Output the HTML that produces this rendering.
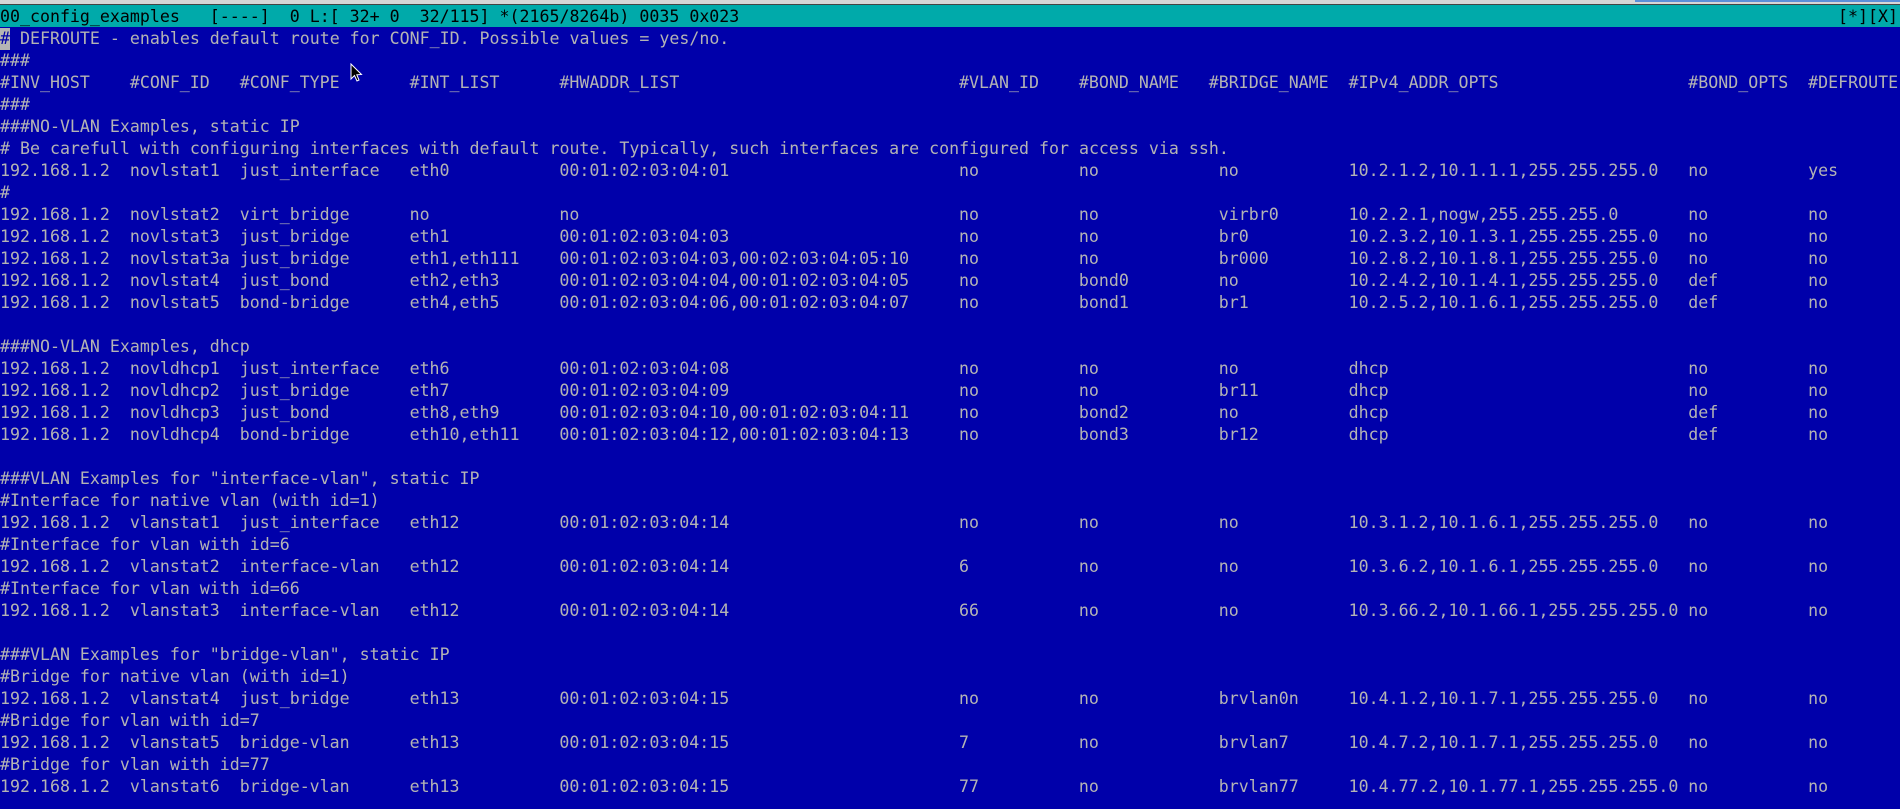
<!DOCTYPE html>
<html><head><meta charset="utf-8"><style>
html,body{margin:0;padding:0;}
body{width:1900px;height:809px;overflow:hidden;background:#0000aa;position:relative;font-family:"DejaVu Sans Mono","Liberation Mono",monospace;font-size:16.6px;color:#b4b4b4;}
#top{position:absolute;left:0;top:0;width:1900px;height:4px;background:#d6d6d6;}
#topb{position:absolute;left:1635px;top:0;width:265px;height:2px;background:#5a8fd8;}
#topl{position:absolute;left:0;top:4px;width:1900px;height:1px;background:#444;}
#hdr{position:absolute;left:0;top:5px;width:1900px;height:22px;background:#00aaaa;color:#000;line-height:23px;white-space:pre;}
#hdr .r{position:absolute;right:2px;top:0;}
#txt{position:absolute;left:0;top:28px;width:1900px;}
.l{height:22px;line-height:22px;white-space:pre;overflow:hidden;}
.l span{display:inline-block;white-space:pre;}
.a{width:13ch}.b{width:11ch}.c{width:17ch}.d{width:15ch}.e{width:40ch}.f{width:12ch}.g{width:14ch}.h{width:13ch}.i{width:34ch}.j{width:12ch}
.cur{background:#b4b4b4;color:#0000aa;}
</style></head><body>
<div id="top"></div><div id="topb"></div><div id="topl"></div>
<div id="hdr">00_config_examples   [----]  0 L:[ 32+ 0  32/115] *(2165/8264b) 0035 0x023<span class="r">[*][X]</span></div>
<div id="txt">
<div class="l"><span class="cur">#</span> DEFROUTE - enables default route for CONF_ID. Possible values = yes/no.</div>
<div class="l">###</div>
<div class="l"><span class="a">#INV_HOST</span><span class="b">#CONF_ID</span><span class="c">#CONF_TYPE</span><span class="d">#INT_LIST</span><span class="e">#HWADDR_LIST</span><span class="f">#VLAN_ID</span><span class="h">#BOND_NAME</span><span class="g">#BRIDGE_NAME</span><span class="i">#IPv4_ADDR_OPTS</span><span class="j">#BOND_OPTS</span>#DEFROUTE</div>
<div class="l">###</div>
<div class="l">###NO-VLAN Examples, static IP</div>
<div class="l"># Be carefull with configuring interfaces with default route. Typically, such interfaces are configured for access via ssh.</div>
<div class="l"><span class="a">192.168.1.2</span><span class="b">novlstat1</span><span class="c">just_interface</span><span class="d">eth0</span><span class="e">00:01:02:03:04:01</span><span class="f">no</span><span class="g">no</span><span class="h">no</span><span class="i">10.2.1.2,10.1.1.1,255.255.255.0</span><span class="j">no</span>yes</div>
<div class="l">#</div>
<div class="l"><span class="a">192.168.1.2</span><span class="b">novlstat2</span><span class="c">virt_bridge</span><span class="d">no</span><span class="e">no</span><span class="f">no</span><span class="g">no</span><span class="h">virbr0</span><span class="i">10.2.2.1,nogw,255.255.255.0</span><span class="j">no</span>no</div>
<div class="l"><span class="a">192.168.1.2</span><span class="b">novlstat3</span><span class="c">just_bridge</span><span class="d">eth1</span><span class="e">00:01:02:03:04:03</span><span class="f">no</span><span class="g">no</span><span class="h">br0</span><span class="i">10.2.3.2,10.1.3.1,255.255.255.0</span><span class="j">no</span>no</div>
<div class="l"><span class="a">192.168.1.2</span><span class="b">novlstat3a</span><span class="c">just_bridge</span><span class="d">eth1,eth111</span><span class="e">00:01:02:03:04:03,00:02:03:04:05:10</span><span class="f">no</span><span class="g">no</span><span class="h">br000</span><span class="i">10.2.8.2,10.1.8.1,255.255.255.0</span><span class="j">no</span>no</div>
<div class="l"><span class="a">192.168.1.2</span><span class="b">novlstat4</span><span class="c">just_bond</span><span class="d">eth2,eth3</span><span class="e">00:01:02:03:04:04,00:01:02:03:04:05</span><span class="f">no</span><span class="g">bond0</span><span class="h">no</span><span class="i">10.2.4.2,10.1.4.1,255.255.255.0</span><span class="j">def</span>no</div>
<div class="l"><span class="a">192.168.1.2</span><span class="b">novlstat5</span><span class="c">bond-bridge</span><span class="d">eth4,eth5</span><span class="e">00:01:02:03:04:06,00:01:02:03:04:07</span><span class="f">no</span><span class="g">bond1</span><span class="h">br1</span><span class="i">10.2.5.2,10.1.6.1,255.255.255.0</span><span class="j">def</span>no</div>
<div class="l"> </div>
<div class="l">###NO-VLAN Examples, dhcp</div>
<div class="l"><span class="a">192.168.1.2</span><span class="b">novldhcp1</span><span class="c">just_interface</span><span class="d">eth6</span><span class="e">00:01:02:03:04:08</span><span class="f">no</span><span class="g">no</span><span class="h">no</span><span class="i">dhcp</span><span class="j">no</span>no</div>
<div class="l"><span class="a">192.168.1.2</span><span class="b">novldhcp2</span><span class="c">just_bridge</span><span class="d">eth7</span><span class="e">00:01:02:03:04:09</span><span class="f">no</span><span class="g">no</span><span class="h">br11</span><span class="i">dhcp</span><span class="j">no</span>no</div>
<div class="l"><span class="a">192.168.1.2</span><span class="b">novldhcp3</span><span class="c">just_bond</span><span class="d">eth8,eth9</span><span class="e">00:01:02:03:04:10,00:01:02:03:04:11</span><span class="f">no</span><span class="g">bond2</span><span class="h">no</span><span class="i">dhcp</span><span class="j">def</span>no</div>
<div class="l"><span class="a">192.168.1.2</span><span class="b">novldhcp4</span><span class="c">bond-bridge</span><span class="d">eth10,eth11</span><span class="e">00:01:02:03:04:12,00:01:02:03:04:13</span><span class="f">no</span><span class="g">bond3</span><span class="h">br12</span><span class="i">dhcp</span><span class="j">def</span>no</div>
<div class="l"> </div>
<div class="l">###VLAN Examples for "interface-vlan", static IP</div>
<div class="l">#Interface for native vlan (with id=1)</div>
<div class="l"><span class="a">192.168.1.2</span><span class="b">vlanstat1</span><span class="c">just_interface</span><span class="d">eth12</span><span class="e">00:01:02:03:04:14</span><span class="f">no</span><span class="g">no</span><span class="h">no</span><span class="i">10.3.1.2,10.1.6.1,255.255.255.0</span><span class="j">no</span>no</div>
<div class="l">#Interface for vlan with id=6</div>
<div class="l"><span class="a">192.168.1.2</span><span class="b">vlanstat2</span><span class="c">interface-vlan</span><span class="d">eth12</span><span class="e">00:01:02:03:04:14</span><span class="f">6</span><span class="g">no</span><span class="h">no</span><span class="i">10.3.6.2,10.1.6.1,255.255.255.0</span><span class="j">no</span>no</div>
<div class="l">#Interface for vlan with id=66</div>
<div class="l"><span class="a">192.168.1.2</span><span class="b">vlanstat3</span><span class="c">interface-vlan</span><span class="d">eth12</span><span class="e">00:01:02:03:04:14</span><span class="f">66</span><span class="g">no</span><span class="h">no</span><span class="i">10.3.66.2,10.1.66.1,255.255.255.0</span><span class="j">no</span>no</div>
<div class="l"> </div>
<div class="l">###VLAN Examples for "bridge-vlan", static IP</div>
<div class="l">#Bridge for native vlan (with id=1)</div>
<div class="l"><span class="a">192.168.1.2</span><span class="b">vlanstat4</span><span class="c">just_bridge</span><span class="d">eth13</span><span class="e">00:01:02:03:04:15</span><span class="f">no</span><span class="g">no</span><span class="h">brvlan0n</span><span class="i">10.4.1.2,10.1.7.1,255.255.255.0</span><span class="j">no</span>no</div>
<div class="l">#Bridge for vlan with id=7</div>
<div class="l"><span class="a">192.168.1.2</span><span class="b">vlanstat5</span><span class="c">bridge-vlan</span><span class="d">eth13</span><span class="e">00:01:02:03:04:15</span><span class="f">7</span><span class="g">no</span><span class="h">brvlan7</span><span class="i">10.4.7.2,10.1.7.1,255.255.255.0</span><span class="j">no</span>no</div>
<div class="l">#Bridge for vlan with id=77</div>
<div class="l"><span class="a">192.168.1.2</span><span class="b">vlanstat6</span><span class="c">bridge-vlan</span><span class="d">eth13</span><span class="e">00:01:02:03:04:15</span><span class="f">77</span><span class="g">no</span><span class="h">brvlan77</span><span class="i">10.4.77.2,10.1.77.1,255.255.255.0</span><span class="j">no</span>no</div>
</div>
<svg style="position:absolute;left:350px;top:63px" width="14" height="20" viewBox="0 0 14 20"><path d="M1 1 L1 16 L4.5 12.5 L7 18 L9 17 L6.8 11.8 L11.5 11.5 Z" fill="#000" stroke="#fff" stroke-width="1"/></svg>
</body></html>
